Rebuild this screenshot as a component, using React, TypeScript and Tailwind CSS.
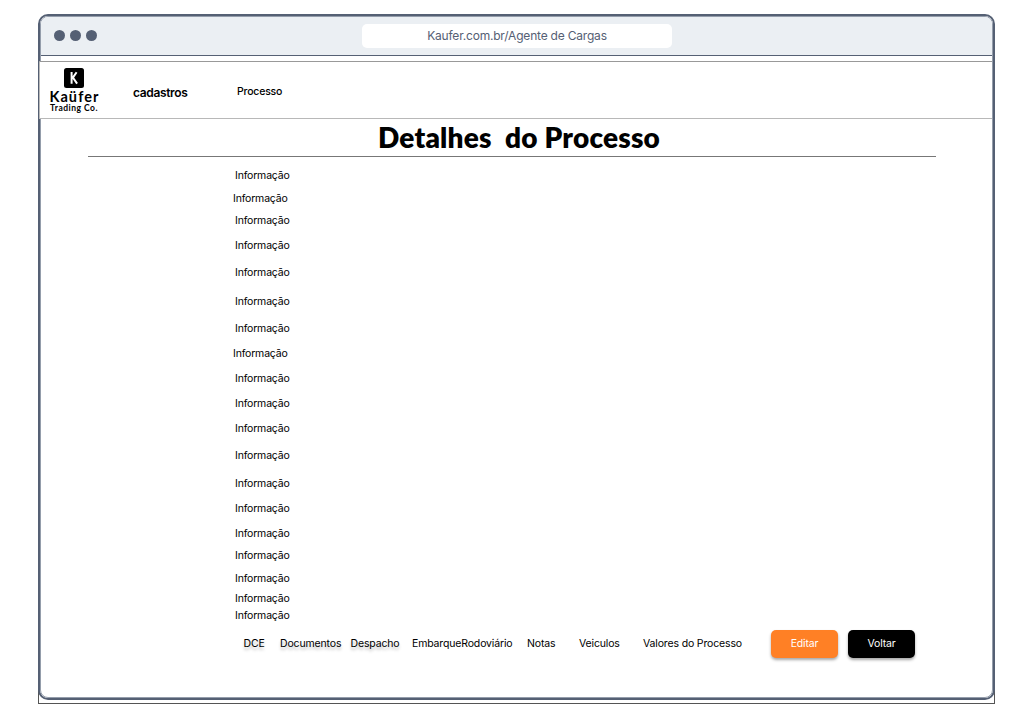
const rows: string[] = [
  "", "mt-[9px] -ml-[2px]", "mt-[8px]", "mt-[11px]", "mt-[13px]", "mt-[15px]", "mt-[13px]",
  "mt-[11px] -ml-[2px]", "mt-[11px]", "mt-[11px]", "mt-[11px]", "mt-[13px]", "mt-[14px]",
  "mt-[11px]", "mt-[11px]", "mt-[8px]", "mt-[9px]", "mt-[6px]", "mt-[3px]",
];

const tabs: { label: string; style: string }[] = [
  { label: "DCE", style: "w-[36.5px] [text-shadow:0_3px_3px_rgba(0,0,0,0.25)]" },
  { label: "Documentos", style: "w-[70.5px] [text-shadow:0_3px_3px_rgba(0,0,0,0.25)]" },
  { label: "Despacho", style: "w-[61.5px] [text-shadow:0_3px_3px_rgba(0,0,0,0.25)]" },
  { label: "EmbarqueRodoviário", style: "w-[115px]" },
  { label: "Notas", style: "w-[52px]" },
  { label: "Veiculos", style: "w-[64px]" },
  { label: "Valores do Processo", style: "w-[128px]" },
];

function Logo() {
  return (
    <div className="ml-[8px] mt-[6px] flex w-[52px] shrink-0 flex-col items-center text-black">
      <svg width="20" height="20" viewBox="0 0 20 20">
        <rect width="20" height="20" rx="2.5" fill="#000" />
        <path d="M7.6 4v11.8M12.6 4.2L8.9 9.6l4.2 6" stroke="#fff" strokeWidth="2" fill="none" />
      </svg>
      <div className="ml-[1px] font-[Lato,sans-serif] text-[14.5px] font-bold leading-[17px] tracking-[1.1px] whitespace-nowrap">Kaüfer</div>
      <div className="font-[Lato,sans-serif] text-[8.5px] font-bold leading-[6px] tracking-[0.5px] whitespace-nowrap">Trading Co.</div>
    </div>
  );
}

export default function App() {
  return (
    <div className="grid h-[722px] w-[1035px] grid-cols-[957px] grid-rows-[690px] overflow-hidden bg-white pl-[38px] pt-[14px] font-[Inter,sans-serif] text-black">
      <div className="col-start-1 row-start-1 mt-[47px] border border-[#555]" />
      <div className="col-start-1 row-start-1 h-[686px] rounded-[10px] border-2 border-[#556074] bg-white">
        <div className="flex h-full flex-col rounded-[8px] border border-[#949dab]">
          <div className="flex h-[39px] shrink-0 items-center rounded-t-[7px] border-b border-[#556074] bg-[#ebeff3]">
            <div className="-mt-[2px] ml-[13px] flex gap-[5px]">
              <i className="size-[11px] rounded-full bg-[#556074]" />
              <i className="size-[11px] rounded-full bg-[#556074]" />
              <i className="size-[11px] rounded-full bg-[#556074]" />
            </div>
            <div className="-mt-px ml-[265px] flex h-[24px] w-[310px] items-center justify-center rounded-[5px] bg-white text-[12px] tracking-[-0.2px] text-[#556074]">
              Kaufer.com.br/Agente de Cargas
            </div>
          </div>
          <header className="relative -ml-[2px] -mr-[3px] mt-[5px] flex h-[58px] shrink-0 border border-[#b8b8b8] border-t-[#999] bg-white">
            <Logo />
            <span className="ml-[33px] mt-[24px] w-[104px] text-[12px] font-semibold leading-[14px] tracking-[-0.35px]">cadastros</span>
            <span className="mt-[23px] text-[10.5px] font-medium leading-[14px] tracking-[-0.2px]">Processo</span>
            <i className="absolute -top-px -bottom-px -right-px w-[3px] border-l border-[#949dab] bg-[#556074]" />
          </header>
          <main className="flex flex-col">
            <h1 className="ml-[47px] h-[38px] w-[848px] border-b border-[#777] pl-[290px] font-[Lato,sans-serif] text-[28px] font-extrabold leading-[36px] tracking-[0.2px] whitespace-pre">Detalhes  do Processo</h1>
            <ul className="ml-[194px] mt-[12px] text-[10.5px] leading-[14px] tracking-[-0.18px]">
              {rows.map((r, i) => <li key={i} className={r}>Informação</li>)}
            </ul>
            <div className="ml-[202.5px] mt-[6px] flex h-[29px] items-center text-[10.5px] tracking-[-0.15px] whitespace-nowrap">
              {tabs.map((t) => <span key={t.label} className={t.style}>{t.label}</span>)}
              <button className="h-[28px] w-[67px] rounded-[5px] bg-[#ff8025] text-white shadow-[0_2px_3px_rgba(0,0,0,0.35)]">Editar</button>
              <button className="ml-[10px] h-[28px] w-[67px] rounded-[5px] bg-black text-white shadow-[0_2px_3px_rgba(0,0,0,0.35)]">Voltar</button>
            </div>
          </main>
        </div>
      </div>
    </div>
  );
}
